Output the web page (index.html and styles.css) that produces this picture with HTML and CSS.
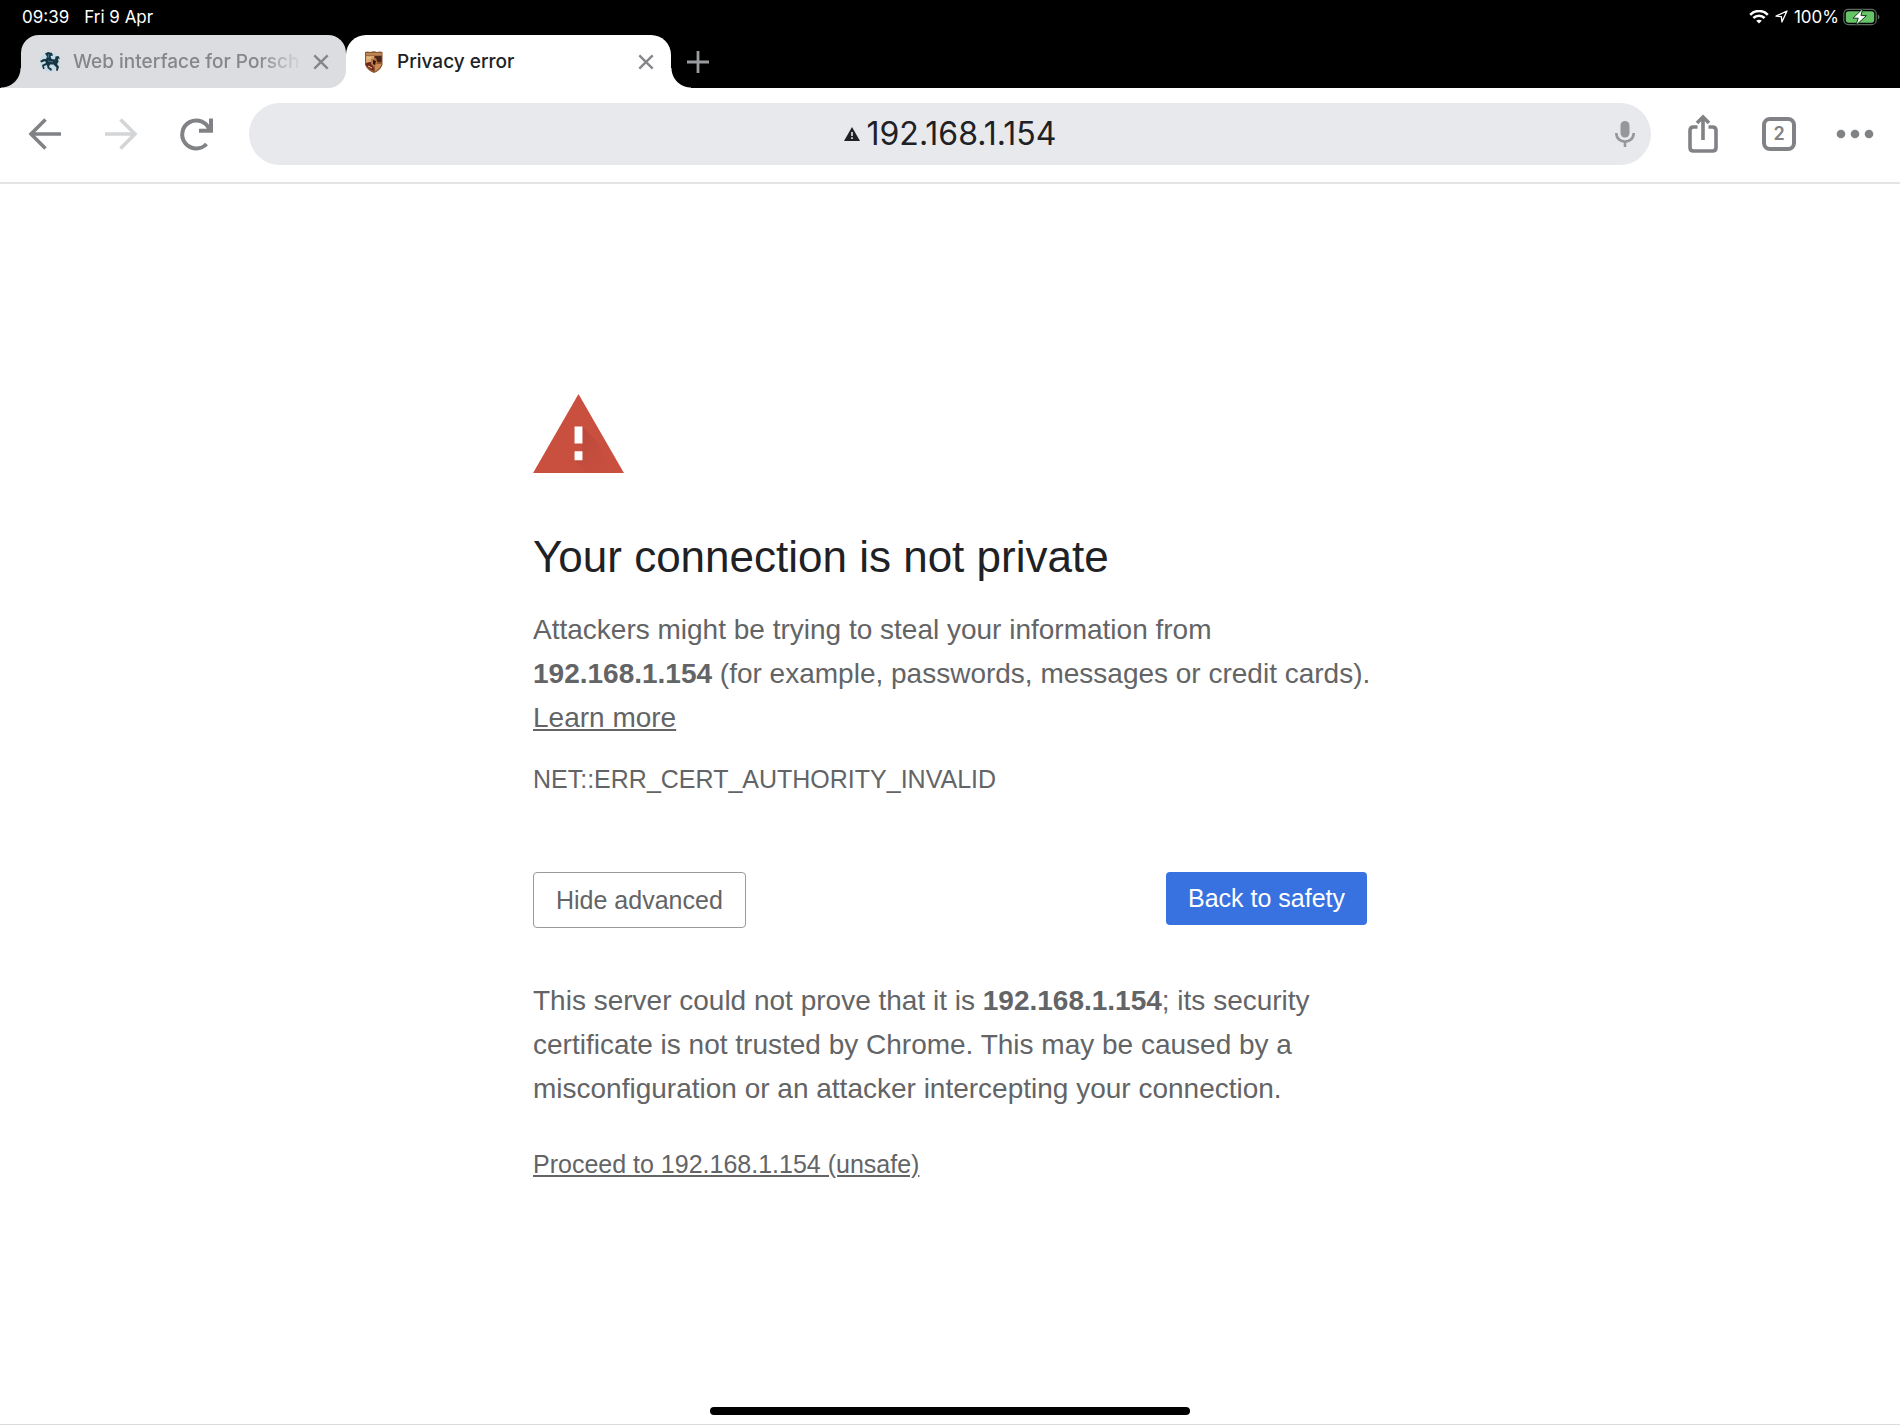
FILE: index.html
```html
<!DOCTYPE html>
<html lang="en">
<head>
<meta charset="utf-8">
<meta name="viewport" content="width=device-width, initial-scale=1">
<title>Privacy error</title>
<link rel="stylesheet" href="styles.css">
</head>
<body>
<header class="chrome">
  <div class="status">
    <span>09:39</span>
    <span class="date">Fri 9 Apr</span>
    <svg class="wifi" width="20" height="14" viewBox="0 0 20 14" fill="none" stroke="#fff" stroke-width="2.6" aria-hidden="true"><path d="M1.2 4.8C6-.2 14-.2 18.800 4.800M4.400 8C7.500 4.900 12.500 4.900 15.600 8"/><path d="M10 13.500 7.200 10.700C8.700 9.300 11.300 9.300 12.800 10.700Z" fill="#fff" stroke="none"/></svg>
    <svg class="location" width="13" height="13" viewBox="0 0 13 13" fill="none" stroke="#fff" stroke-width="1.300" stroke-linejoin="round" aria-hidden="true"><path d="M1 6.200 12 1 6.900 12 6.400 6.700Z"/></svg>
    <span>100%</span>
    <svg class="battery" width="37" height="18" viewBox="0 0 37 18" aria-hidden="true"><rect x=".8" y="1.300" width="32.400" height="15.400" rx="4.500" fill="none" stroke="#5c6a5d" stroke-width="1.200"/><rect x="2.800" y="3.200" width="28.400" height="11.600" rx="2.800" fill="#65c466"/><path d="M34.800 6.500C37 7.500 37 10.500 34.800 11.500Z" fill="#5c6a5d"/><path d="M19.800.6 10 10.200H15.200L12.800 17.400 23.500 7.600H18Z" fill="#fff" stroke="#163c1b" stroke-width="1"/></svg>
  </div>
  <nav class="tabs" aria-label="Tabs">
    <div class="tab tab-idle">
      <svg class="favicon" width="22" height="22" viewBox="0 0 22 22" aria-hidden="true"><circle cx="11" cy="11" r="10" fill="#c5dce6"/><path d="M6 2.500 9 1 13 2 14 4.500 11.500 5 12.500 8 16 8.500 16.500 5.500 19.500 5 21 8 19 7.500 19.500 11 18 13 20 16 18.500 20 17 19.500 17.500 16.500 14.500 13.500 11 13.500 10 16 13 18 12 20 8.500 17 8 14 5 15 5.500 18 4 18 3 14 7 12 6 10 2.500 11.500 1 10 4.500 8 7 8 8 5.500Z" fill="#173542"/><path d="M10 3 9 7M9 10 14 11" stroke="#447386" fill="none"/></svg>
      <a class="tab-title faded" href="#">Web interface for Porsch</a>
      <button class="tab-close" type="button" aria-label="Close tab"><svg width="16" height="16" viewBox="0 0 16 16" stroke="currentColor" stroke-width="2.400" fill="none"><path d="M1.300 1.300 14.700 14.700M14.700 1.300 1.300 14.700"/></svg></button>
    </div>
    <div class="tab tab-active">
      <svg class="favicon" width="22" height="22" viewBox="0 0 22 22" aria-hidden="true"><path d="M2 1Q5 0 7 1 11-.5 14 1 17 0 19.500 1V14Q17 20 11 22 5 20 2 14Z" fill="#8f552f"/><path d="M3 2H18.500V4.500H3Z" fill="#b98656"/><path d="M3 5H11V10L3 12Z" fill="#d8a873"/><path d="M12 5H18.500V11H12Z" fill="#4a241b"/><path d="M3 12 9 11 11 20Q5 17 3 14Z" fill="#6c241a"/><path d="M12 13H18.500Q17 18 12 20.500Z" fill="#c98c58"/><path d="M8 8 13 7 14.500 12 11 16 8 13Z" fill="#b57643"/><path d="M10 9 13 10 12 14 10 13Z" fill="#2b1613"/><path d="M4 7H8M5 15 9 17" stroke="#f0c997" fill="none"/></svg>
      <a class="tab-title" href="#" aria-current="page">Privacy error</a>
      <button class="tab-close" type="button" aria-label="Close tab"><svg width="16" height="16" viewBox="0 0 16 16" stroke="currentColor" stroke-width="2.400" fill="none"><path d="M1.300 1.300 14.700 14.700M14.700 1.300 1.300 14.700"/></svg></button>
    </div>
    <button class="new-tab" type="button" aria-label="New tab"><svg width="24" height="24" viewBox="0 0 24 24" stroke="currentColor" stroke-width="2.800"><path d="M12 1V23M1 12H23"/></svg></button>
  </nav>
</header>

<form class="toolbar" onsubmit="return false">
  <button class="tool" type="button" aria-label="Back"><svg width="36" height="36" viewBox="0 0 36 36" fill="none" stroke="currentColor" stroke-width="3.600"><path d="M34 18H4M18.500 3.500 4 18 18.500 32.500"/></svg></button>
  <button class="tool" type="button" aria-label="Forward" disabled><svg width="36" height="36" viewBox="0 0 36 36" fill="none" stroke="currentColor" stroke-width="3.600"><path d="M2 18H32M17.500 3.500 32 18 17.500 32.500"/></svg></button>
  <button class="tool" type="button" aria-label="Reload"><svg width="36" height="36" viewBox="0 0 36 36" fill="none" stroke="currentColor" stroke-width="4"><path d="M27.500 28A14 14 0 1 1 30.500 14M32 2.500V14.800H20"/></svg></button>
  <div class="omnibox">
    <div class="address">
      <svg width="16" height="14" viewBox="0 0 16 14" aria-hidden="true"><path d="M8 0 16 14H0Z" fill="#202124"/><path d="M7.200 5H8.800V9H7.200ZM7.200 10.300H8.800V12H7.200Z" fill="#e8e9ed"/></svg>
      <input class="url" type="text" value="192.168.1.154" aria-label="Address">
    </div>
    <button class="mic" type="button" aria-label="Voice search"><svg width="20" height="28" viewBox="0 0 20 28"><rect x="5.500" y="1" width="9" height="16.500" rx="4.500" fill="currentColor"/><path d="M1.300 13C1.300 24.500 18.700 24.500 18.700 13M10 21.500V27" fill="none" stroke="currentColor" stroke-width="2.600"/></svg></button>
  </div>
  <button class="tool" type="button" aria-label="Share"><svg width="32" height="40" viewBox="0 0 32 40" fill="none" stroke="currentColor" stroke-width="3.600"><path d="M10.500 13H6.500Q3 13 3 16.500V33.500Q3 37 6.500 37H25.500Q29 37 29 33.500V16.500Q29 13 25.500 13H21.500M16 26V4M10 9 16 3 22 9"/></svg></button>
  <button class="tool" type="button" aria-label="Show 2 tabs"><span class="count">2</span></button>
  <button class="tool" type="button" aria-label="More"><svg width="38" height="10" viewBox="0 0 38 10" fill="currentColor"><circle cx="5" cy="5" r="4.300"/><circle cx="19" cy="5" r="4.300"/><circle cx="33" cy="5" r="4.300"/></svg></button>
</form>

<main class="interstitial">
  <svg class="warning" width="91" height="79" viewBox="0 0 92 80" role="img" aria-label="Warning">
    <defs><linearGradient id="shade" x1="0" y1="0" x2="1" y2="1"><stop offset="0" stop-color="#a63f34" stop-opacity=".6"/><stop offset="1" stop-color="#c3503f" stop-opacity="0"/></linearGradient></defs>
    <path d="M46 0 92 80H0Z" fill="#c94f3f"/>
    <path d="M50 33 63 46 83 80H54L42 67H50Z" fill="url(#shade)"/>
    <path d="M42 33H50V50H42ZM42 58H50V67H42Z" fill="#fff"/>
  </svg>
  <h1>Your connection is not private</h1>
  <p class="message">Attackers might be trying to steal your information from <strong>192.168.1.154</strong> (for example, passwords, messages or credit cards). <a href="#">Learn more</a></p>
  <p class="code">NET::ERR_CERT_AUTHORITY_INVALID</p>
  <div class="actions">
    <button class="action secondary" type="button">Hide advanced</button>
    <button class="action primary" type="button">Back to safety</button>
  </div>
  <p class="message">This server could not prove that it is <strong>192.168.1.154</strong>; its security certificate is not trusted by Chrome. This may be caused by a misconfiguration or an attacker intercepting your connection.</p>
  <p class="proceed"><a href="#">Proceed to 192.168.1.154 (unsafe)</a></p>
</main>
<div class="home-bar"></div>
</body>
</html>
```
FILE: styles.css
```css
* { box-sizing: border-box; }

body {
  display: flex;
  flex-direction: column;
  min-height: 100vh;
  margin: 0;
  border-bottom: 1px solid #dcdcde;
  background: #fff;
  color: #636466;
  font-family: "Liberation Sans", Arial, sans-serif;
}

button {
  display: flex;
  align-items: center;
  justify-content: center;
  padding: 0;
  border: 0;
  background: none;
  color: inherit;
  font: inherit;
}

svg { display: block; flex: none; }

/* Status bar and tab strip */
.chrome {
  background: #000;
  font-family: Inter, sans-serif;
}

.status {
  display: flex;
  align-items: center;
  height: 35px;
  padding: 0 20px 2px 22px;
  color: #fff;
  font-size: 17px;
  font-weight: 400;
}

.date { margin-left: 15px; }
.wifi { margin-left: auto; }
.location { margin: 0 6px; }
.battery { margin-left: 4px; }

.tabs {
  display: flex;
  height: 53px;
  padding-left: 21px;
}

.tab {
  position: relative;
  display: flex;
  align-items: center;
  width: 325px;
  padding: 0 15px 0 18px;
  font-size: 19px;
  font-weight: 500;
}

.tab-idle {
  z-index: 1;
  border-radius: 18px 18px 18px 0;
  background: #dcdde0;
  color: #85868a;
}

.tab-active {
  padding-left: 17px;
  border-radius: 20px 20px 0 0;
  background: #fff;
  color: #202124;
}

.tab-idle::before,
.tab-active::before,
.tab-active::after {
  content: "";
  position: absolute;
  bottom: 0;
  width: 20px;
  height: 20px;
}

.tab-idle::before {
  left: -20px;
  background: radial-gradient(circle at 0 0, transparent 19px, #dcdde0 20px);
}

.tab-active::before { left: -20px; background: #fff; }

.tab-active::after {
  left: 100%;
  background: radial-gradient(circle at 100% 0, transparent 19px, #fff 20px);
}

.tab-title {
  flex: 1;
  overflow: hidden;
  margin: 0 8px 0 12px;
  color: inherit;
  line-height: 28px;
  text-decoration: none;
  white-space: nowrap;
}

.faded { mask-image: linear-gradient(to right, #000 80%, transparent); }

.tab-close { width: 20px; height: 28px; color: #85868a; }

.new-tab { width: 54px; color: #9a9b9f; }

/* Toolbar */
.toolbar {
  display: flex;
  align-items: center;
  height: 96px;
  padding: 0 7px 3px;
  border-bottom: 2px solid #e4e4e6;
  color: #808285;
  font-family: Inter, sans-serif;
}

.tool { flex: none; width: 76px; height: 62px; }
.tool:disabled { color: #d4d5d6; }

.omnibox {
  display: grid;
  grid-template-columns: 1fr auto 1fr;
  align-items: center;
  flex: 1;
  height: 62px;
  margin: 0 14px;
  padding: 0 16px;
  border-radius: 31px;
  background: #e8e9ed;
}

.address {
  display: flex;
  grid-column: 2;
  align-items: center;
  gap: 7px;
}

.url {
  width: 190px;
  padding: 0;
  border: 0;
  outline: 0;
  background: none;
  color: #202124;
  font: 400 32px/40px Inter, sans-serif;
}

.mic { justify-self: end; width: 20px; height: 40px; color: #96979b; }

.count {
  width: 34px;
  height: 34px;
  border: 4px solid currentColor;
  border-radius: 8px;
  font-size: 18px;
  font-weight: 600;
  line-height: 26px;
}

/* Warning page */
.interstitial {
  width: 100%;
  max-width: 834px;
  margin: 0 auto;
  padding-top: 210px;
}

.warning { margin-bottom: 57px; }

h1 {
  margin: 0 0 24px;
  color: #202124;
  font-size: 44px;
  font-weight: 400;
  line-height: 54px;
}

p { margin: 0; }

/* The last words of a line may hang past the button edge */
.message {
  margin-right: -12px;
  font-size: 28px;
  line-height: 44px;
}

a { color: inherit; text-underline-offset: 2px; }

.code,
.proceed { font-size: 25px; line-height: 40px; }

.code { margin-top: 19px; }
.proceed { margin-top: 33px; }

.actions {
  display: flex;
  align-items: flex-start;
  justify-content: space-between;
  margin: 73px 0 51px;
}

.action {
  height: 53px;
  padding: 0 22px;
  border-radius: 4px;
  font-size: 25px;
}

.secondary { height: 56px; border: 1px solid #9a9b9e; }
.primary { background: #3871e0; color: #fff; }

.home-bar {
  width: 480px;
  height: 8px;
  margin: auto auto 9px;
  border-radius: 4px;
  background: #000;
}
```
